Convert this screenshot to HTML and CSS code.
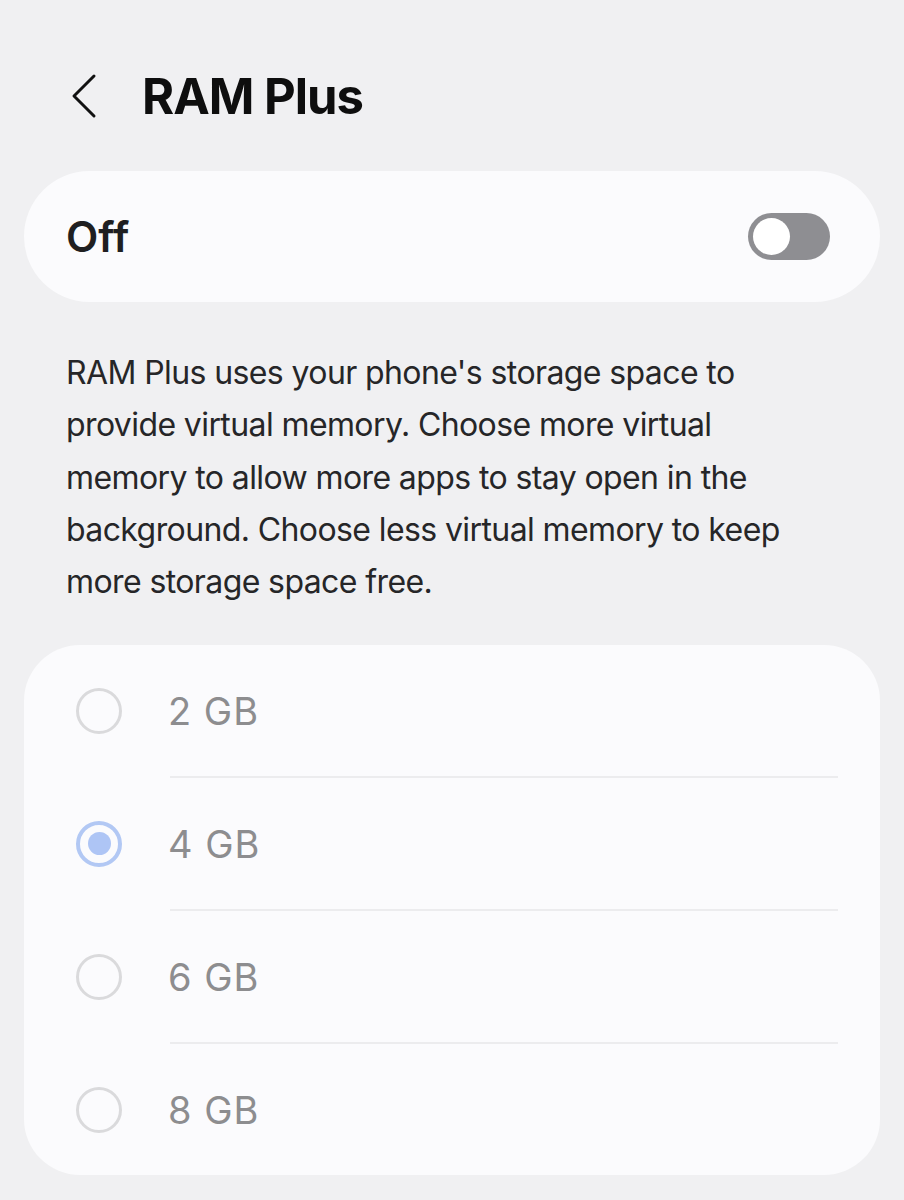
FILE: index.html
```html
<!DOCTYPE html>
<html lang="en">
<head>
<meta charset="utf-8">
<title>RAM Plus</title>
<link rel="stylesheet" href="styles.css">
</head>
<body>
<div class="page">
  <header class="header">
    <svg class="back" width="26" height="46" viewBox="0 0 26 46" aria-hidden="true">
      <path d="M23 3 L3 23 L23 43" fill="none" stroke="#111" stroke-width="3" stroke-linecap="round" stroke-linejoin="round"/>
    </svg>
    <h1 class="title">RAM Plus</h1>
  </header>

  <section class="switch-card">
    <span class="switch-label">Off</span>
    <span class="toggle"><span class="knob"></span></span>
  </section>

  <p class="desc">RAM Plus uses your phone's storage space to provide virtual memory. Choose more virtual memory to allow more apps to stay open in the background. Choose less virtual memory to keep more storage space free.</p>

  <section class="options">
    <div class="option"><span class="radio"></span><span class="opt-label">2 GB</span></div>
    <div class="divider"></div>
    <div class="option"><span class="radio checked"></span><span class="opt-label">4 GB</span></div>
    <div class="divider"></div>
    <div class="option"><span class="radio"></span><span class="opt-label">6 GB</span></div>
    <div class="divider"></div>
    <div class="option"><span class="radio"></span><span class="opt-label">8 GB</span></div>
  </section>
</div>
</body>
</html>
```
FILE: styles.css
```css
html, body {
  margin: 0;
  padding: 0;
  background: #f0f0f2;
}
body {
  font-family: Inter, "Noto Sans", Roboto, sans-serif;
  color: #1c1c1e;
}
.page {
  padding: 0 24px;
}
.header {
  display: flex;
  align-items: center;
  box-sizing: border-box;
  padding-top: 46px;
  padding-left: 47px;
  height: 146px;
}
.back {
  display: block;
  flex: none;
}
.title {
  margin: 0 0 0 45px;
  font-size: 49px;
  font-weight: 700;
  letter-spacing: -1px;
  color: #0e0e0e;
}
.switch-card {
  margin-top: 25px;
  height: 131px;
  border-radius: 66px;
  background: #fbfbfd;
  display: flex;
  align-items: center;
  justify-content: space-between;
  padding: 0 50px 0 42px;
}
.switch-label {
  font-size: 42px;
  font-weight: 600;
  color: #1f1f21;
}
.toggle {
  width: 82px;
  height: 47px;
  border-radius: 24px;
  background: #8e8e92;
  display: flex;
  align-items: center;
  padding-left: 5px;
  box-sizing: border-box;
}
.knob {
  width: 37px;
  height: 37px;
  border-radius: 50%;
  background: #ffffff;
}
.desc {
  margin: 45px 0 0;
  padding: 0 42px;
  font-size: 32px;
  letter-spacing: -0.6px;
  line-height: 52.3px;
  color: #262628;
}
.options {
  margin-top: 37px;
  background: #fbfbfd;
  border-radius: 56px;
  display: flex;
  flex-direction: column;
}
.option {
  height: 131px;
  display: flex;
  align-items: center;
  padding-left: 52px;
}
.radio {
  width: 46px;
  height: 46px;
  box-sizing: border-box;
  border-radius: 50%;
  border: 3px solid #dadadc;
  flex: none;
  display: flex;
  align-items: center;
  justify-content: center;
}
.radio.checked {
  border: 4px solid #b2c8f4;
}
.radio.checked::after {
  content: "";
  width: 23px;
  height: 23px;
  border-radius: 50%;
  background: #aec5f5;
}
.opt-label {
  margin-left: 46px;
  font-size: 38px;
  letter-spacing: 1px;
  color: #8d8d8f;
}
.divider {
  height: 2px;
  background: #ececee;
  margin: 0 42px 0 146px;
}
```
